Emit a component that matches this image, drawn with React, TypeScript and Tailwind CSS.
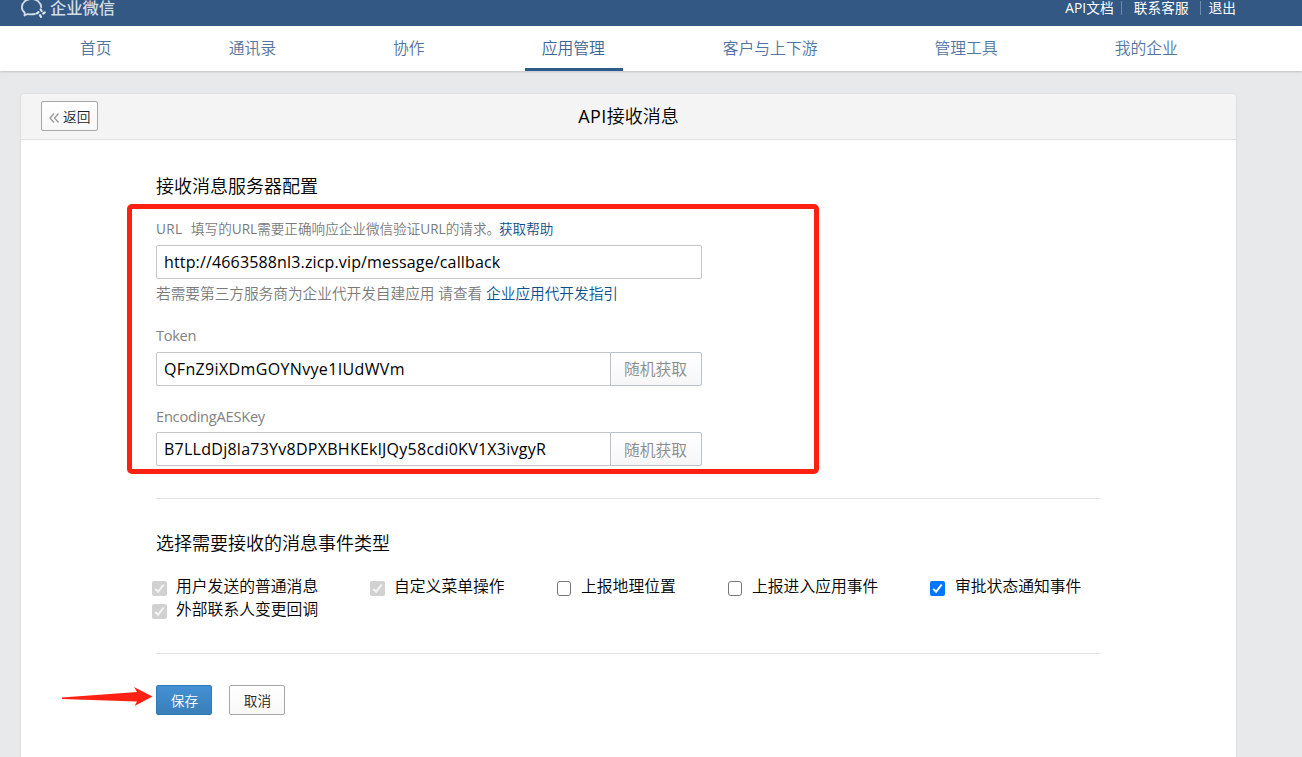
import React from "react";

const navItems = [
  { label: "首页", active: false },
  { label: "通讯录", active: false },
  { label: "协作", active: false },
  { label: "应用管理", active: true },
  { label: "客户与上下游", active: false },
  { label: "管理工具", active: false },
  { label: "我的企业", active: false },
];

type CheckState = "disabled" | "off" | "on";

const events: { label: string; state: CheckState }[] = [
  { label: "用户发送的普通消息", state: "disabled" },
  { label: "自定义菜单操作", state: "disabled" },
  { label: "上报地理位置", state: "off" },
  { label: "上报进入应用事件", state: "off" },
  { label: "审批状态通知事件", state: "on" },
  { label: "外部联系人变更回调", state: "disabled" },
];

function Logo() {
  return (
    <svg className="block h-[24px] w-[28px] shrink-0" viewBox="0 0 28 24" fill="none">
      <path
        d="M21.300 7.200C21 2.500 16.800 -1 11.600 -1C6.200 -1 1.900 2.600 1.900 7C1.900 9.300 2.900 11.300 4.700 12.700L4.500 15.500L7.600 14C9.600 14.600 12.300 14.600 15 14"
        stroke="#d3dde8"
        strokeWidth="1.800"
        strokeLinecap="round"
        strokeLinejoin="round"
      />
      <g stroke="#dfe7ef" strokeWidth="2.200" strokeLinecap="round">
        <path d="M20.600 9.500L21.600 11M24.800 12.400L23.200 13.500M21 16.800L20 15.200M16.900 13.400L18.500 12.200" />
      </g>
    </svg>
  );
}

function Checkbox({ state }: { state: CheckState }) {
  if (state === "off") {
    return <span className="mr-[10px] block h-[15px] w-[14px] shrink-0 rounded-[3px] border border-[#767676] bg-white" />;
  }
  return (
    <svg className="mr-[9px] block h-[15px] w-[15px] shrink-0" viewBox="0 0 15 15" fill="none">
      <rect width="15" height="15" rx="2" fill={state === "on" ? "#0075ff" : "#d1d1d1"} />
      <path d="M3.200 7.900L6.100 10.800L11.700 3.500" stroke={state === "on" ? "#ffffff" : "#f5f5f5"} strokeWidth="2" />
    </svg>
  );
}

function KeyField({ value, spacing, buttonPad }: { value: string; spacing: string; buttonPad: string }) {
  return (
    <div className="flex h-[34px] w-[546px]">
      <input
        readOnly
        value={value}
        className={`h-full w-[455px] rounded-l-[2px] border border-[#c5c5c5] bg-white pl-[7px] pb-px text-[16px] text-black outline-none ${spacing}`}
      />
      <button
        className={`-ml-px h-full w-[92px] rounded-r-[2px] border border-[#b9c1ca] bg-linear-to-b from-white to-[#f6f6f6] pr-px text-[15.8px] text-[#8b8b8b] ${buttonPad}`}
      >
        随机获取
      </button>
    </div>
  );
}

export default function App() {
  return (
    <div className="relative flex h-[757px] w-[1302px] flex-col overflow-hidden bg-[#e8e9eb] font-['Open_Sans','Noto_Sans_CJK_SC_DemiLight','Noto_Sans_CJK_SC',sans-serif] text-black">
      <header className="flex h-[26px] shrink-0 items-start bg-[#335883] pl-[20px] pr-[66px] text-white">
        <Logo />
        <span className="ml-[2px] -mt-[5px] font-['Noto_Sans_CJK_SC',sans-serif] text-[16.3px] leading-[24px] font-medium text-[#d3dde8]">企业微信</span>
        <div className="ml-auto flex items-center font-['Open_Sans','Noto_Sans_CJK_SC',sans-serif] text-[13.7px] leading-[16px]">
          <span className="tracking-[0.1px]">API文档</span>
          <span className="ml-[7px] mr-[12px] h-[14px] w-px bg-[#6e8bab]" />
          <span>联系客服</span>
          <span className="ml-[11px] mr-[8px] h-[14px] w-px bg-[#6e8bab]" />
          <span>退出</span>
        </div>
      </header>

      <nav className="flex h-[45px] shrink-0 justify-between bg-white pl-[63px] pr-[107px] text-[15.8px] shadow-[0_1px_2px_rgba(0,0,0,0.16)]">
        {navItems.map((item) => (
          <a
            key={item.label}
            className={
              item.active
                ? "h-[45px] w-[98px] border-b-[3px] border-[#2d5b8c] pl-[17px] leading-[44px] text-[#3c6494]"
                : "h-[45px] px-[17px] leading-[44px] text-[#5274a1]"
            }
          >
            {item.label}
          </a>
        ))}
      </nav>

      <main className="ml-[21px] mt-[23px] flex h-[700px] w-[1215px] shrink-0 flex-col rounded-t-[4px] bg-white shadow-[0_0_2px_rgba(0,0,0,0.15)]">
        <div className="flex h-[46px] shrink-0 items-center rounded-t-[4px] border-b border-[#dfe1e3] bg-[#f4f4f4] pl-[20px]">
          <button className="mb-px flex h-[30px] w-[57px] shrink-0 items-center rounded-[2px] border border-[#a6a6a6] bg-linear-to-b from-white to-[#f8f8f8] pl-[7px] text-[13.7px] text-[#222]">
            <svg className="mr-[4px] mt-[3px] h-[10px] w-[10px]" viewBox="0 0 10 10" fill="none" stroke="#999999" strokeWidth="1.300">
              <path d="M5 0.500L1 5L5 9.500M9.500 0.500L5.500 5L9.500 9.500" />
            </svg>
            <span className="mt-[2px]">返回</span>
          </button>
          <h1 className="mb-[2px] flex-1 pr-[77px] text-center text-[18px] leading-[42px]">
            <span className="tracking-[0.4px]">API</span>接收消息
          </h1>
        </div>

        <div className="flex w-[1080px] flex-col pl-[135px]">
          <h2 className="mt-[33px] h-[27px] text-[18px] leading-[27px]">接收消息服务器配置</h2>

          <p className="mt-[18px] flex h-[22px] text-[13.6px] leading-[22px] text-[#7a7a7a]">
            <span className="w-[35px] tracking-[0.3px]">URL</span>
            <span className="w-[308px] whitespace-nowrap">填写的URL需要正确响应企业微信验证URL的请求。</span>
            <a className="whitespace-nowrap text-[#0d4f8c]">获取帮助</a>
          </p>
          <input
            readOnly
            value="http://4663588nl3.zicp.vip/message/callback"
            className="mt-[5px] h-[34px] w-[546px] rounded-[2px] border border-[#c5c5c5] bg-white pl-[7px] text-[16px] tracking-[0.15px] text-black outline-none"
          />
          <p className="mt-[3px] h-[22px] text-[14.67px] leading-[22px] text-[#7a7a7a]">
            若需要第三方服务商为企业代开发自建应用 请查看 <a className="text-[#0d4f8c]">企业应用代开发指引</a>
          </p>

          <label className="mt-[20px] mb-[6px] h-[22px] text-[14.65px] leading-[22px] tracking-[-0.35px] text-[#828282]">Token</label>
          <KeyField value="QFnZ9iXDmGOYNvye1IUdWVm" spacing="tracking-[0.350px]" buttonPad="pt-[2px]" />

          <label className="mt-[19px] mb-[5px] h-[22px] text-[14.65px] leading-[22px] tracking-[-0.25px] text-[#828282]">EncodingAESKey</label>
          <KeyField value="B7LLdDj8la73Yv8DPXBHKEklJQy58cdi0KV1X3ivgyR" spacing="tracking-[0.260px]" buttonPad="pt-[4px]" />

          <hr className="mt-[32px] border-t border-[#e4e4e4]" />

          <h2 className="mt-[31px] h-[27px] text-[18px] leading-[27px]">选择需要接收的消息事件类型</h2>

          <div className="-ml-[4px] mt-[18px] grid grid-cols-[218px_187px_171px_202px_160px] text-[15.8px] leading-[23px]">
            {events.map((e) => (
              <label key={e.label} className={e.state === "on" ? "flex h-[23px] items-center gap-px whitespace-nowrap" : "flex h-[23px] items-center whitespace-nowrap"}>
                <span className="mt-[4px]">
                  <Checkbox state={e.state} />
                </span>
                {e.label}
              </label>
            ))}
          </div>

          <hr className="mt-[32px] border-t border-[#e4e4e4]" />

          <div className="mt-[31px] flex gap-[17px] text-[13.7px]">
            <button className="h-[30px] w-[56px] rounded-[2px] border border-[#2b7bbf] bg-linear-to-b from-[#4490d4] to-[#397fb9] pl-px pt-[2px] text-white">保存</button>
            <button className="h-[30px] w-[56px] rounded-[2px] border border-[#a6a6a6] bg-linear-to-b from-white to-[#f8f8f8] pl-px pt-[2px] text-[#222]">取消</button>
          </div>
        </div>
      </main>

      <div className="pointer-events-none absolute left-[127px] top-[204px] h-[270px] w-[692px] rounded-[5px] border-[5px] border-[#ff2014]" />
      <svg className="pointer-events-none absolute left-[60px] top-[684px] h-[26px] w-[96px]" viewBox="0 0 96 26">
        <path d="M2 13.500L77 8L74 3L92.500 12.500L74.500 22L77 17.500L2 15Z" fill="#ff2014" />
      </svg>
    </div>
  );
}
